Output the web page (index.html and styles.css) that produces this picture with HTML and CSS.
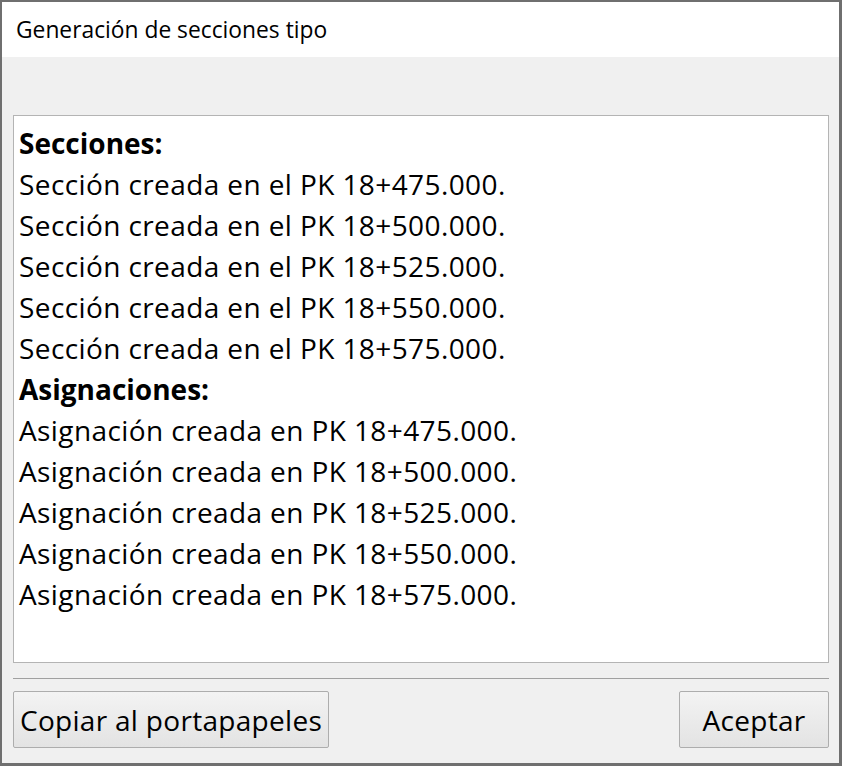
FILE: index.html
```html
<!DOCTYPE html>
<html lang="es">
<head>
<meta charset="utf-8">
<title>Generación de secciones tipo</title>
<link rel="stylesheet" href="styles.css">
</head>
<body>
<div class="window">
  <div class="titlebar">Generación de secciones tipo</div>
  <div class="client">
    <div class="log">
      <div class="line bold">Secciones:</div>
      <div class="line">Sección creada en el PK 18+475.000.</div>
      <div class="line">Sección creada en el PK 18+500.000.</div>
      <div class="line">Sección creada en el PK 18+525.000.</div>
      <div class="line">Sección creada en el PK 18+550.000.</div>
      <div class="line">Sección creada en el PK 18+575.000.</div>
      <div class="line bold">Asignaciones:</div>
      <div class="line">Asignación creada en PK 18+475.000.</div>
      <div class="line">Asignación creada en PK 18+500.000.</div>
      <div class="line">Asignación creada en PK 18+525.000.</div>
      <div class="line">Asignación creada en PK 18+550.000.</div>
      <div class="line">Asignación creada en PK 18+575.000.</div>
    </div>
    <div class="sep"></div>
    <div class="buttons">
      <button class="btn btn-copy">Copiar al portapapeles</button>
      <button class="btn btn-ok">Aceptar</button>
    </div>
  </div>
</div>
</body>
</html>
```
FILE: styles.css
```css
html, body {
  margin: 0;
  padding: 0;
}
body {
  font-family: "Open Sans", "Noto Sans", sans-serif;
  color: #000;
}
.window {
  width: 842px;
  height: 766px;
  box-sizing: border-box;
  border-style: solid;
  border-color: #6f6f6f;
  border-width: 2px 3px 3px 2px;
  background: #f0f0f0;
  display: flex;
  flex-direction: column;
}
.titlebar {
  height: 55px;
  background: #fff;
  display: flex;
  align-items: center;
  padding-left: 14px;
  font-size: 22.8px;
}
.client {
  flex: 1;
  padding: 58px 10px 0 11px;
  display: flex;
  flex-direction: column;
}
.log {
  height: 548px;
  box-sizing: border-box;
  background: #fff;
  border: 1px solid #b4b4b4;
  padding: 7px 5px;
  font-size: 28px;
  letter-spacing: 0.4px;
}
.line {
  height: 41px;
  line-height: 41px;
  white-space: nowrap;
}
.bold {
  font-weight: 700;
  letter-spacing: 0;
}
.sep {
  margin-top: 15px;
  height: 1px;
  background: #a0a0a0;
}
.buttons {
  margin-top: 12px;
  display: flex;
  justify-content: space-between;
}
.btn {
  height: 57px;
  box-sizing: border-box;
  border: 1px solid #adadad;
  border-radius: 2px;
  background: linear-gradient(#f3f3f3, #e3e3e3);
  font-family: inherit;
  font-size: 28px;
  letter-spacing: 0.3px;
  color: #000;
  padding: 0;
}
.btn-copy {
  width: 316px;
}
.btn-ok {
  width: 150px;
}
```
